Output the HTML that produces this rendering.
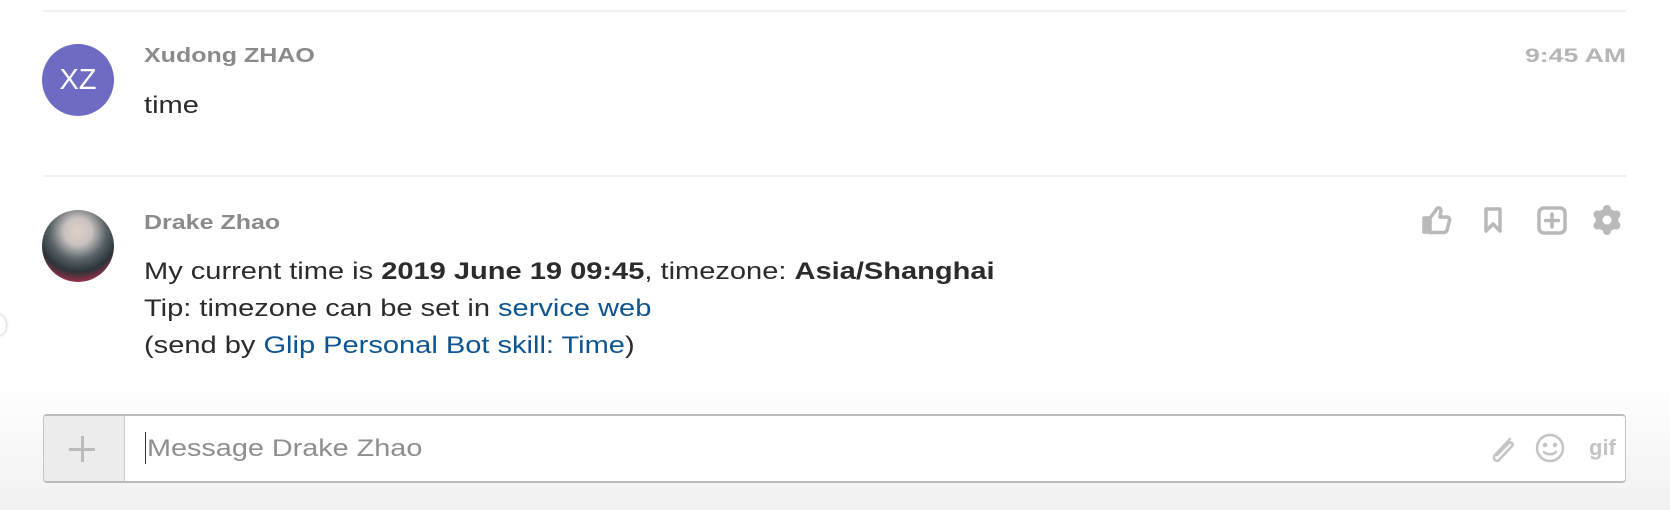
<!DOCTYPE html>
<html><head><style>
body{margin:0;width:1670px;height:510px;overflow:hidden;background:linear-gradient(#fff 0,#fff 380px,#f1f1f1 510px);font-family:"Liberation Sans",sans-serif;position:relative}
.abs{position:absolute}
.hr{position:absolute;left:43px;width:1583px;height:2px;background:#efefef}
.name{position:absolute;left:144px;font-size:20px;font-weight:bold;color:#8a8a8a;transform:scaleX(1.25);transform-origin:0 0;white-space:nowrap}
.txt{position:absolute;left:144px;font-size:24px;color:#2b2b2b;line-height:37px;white-space:nowrap;transform:scaleX(1.21);transform-origin:0 0}
a{color:#0d5590;text-decoration:none}
</style></head><body>
<div class="hr" style="top:10px"></div>
<div class="abs" style="left:42px;top:44px;width:72px;height:72px;border-radius:50%;background:#6e6bc2;color:#fff;font-size:29px;line-height:72px;text-align:center">XZ</div>
<div class="name" style="top:45px">Xudong ZHAO</div>
<div class="abs" style="left:1525px;top:46px;font-size:19px;font-weight:bold;color:#b5b5b5;transform:scaleX(1.4);transform-origin:0 0;white-space:nowrap">9:45 AM</div>
<div class="txt" style="top:87px">time</div>
<div class="hr" style="top:175px"></div>
<div class="abs" style="left:42px;top:210px;width:72px;height:72px;border-radius:50%;background:radial-gradient(circle at 50% 30%,#e0d0c8 0,#c9c2c0 22%,#5a6468 45%,#2b3438 65%,#b0304a 85%,#ddd 100%)"></div>
<div class="name" style="top:212px">Drake Zhao</div>
<div class="txt" style="top:253px">My current time is <b>2019 June 19 09:45</b>, timezone: <b>Asia/Shanghai</b><br>Tip: timezone can be set in <a>service web</a><br>(send by <a>Glip Personal Bot skill: Time</a>)</div>
<svg class="abs" style="left:1420px;top:203px" width="210" height="34" viewBox="0 0 210 34" fill="none" stroke="#b9b9b9" stroke-width="3.5" stroke-linejoin="round" stroke-linecap="round">
<path d="M4 15h6v14H4z" fill="#b9b9b9"/><path d="M10 15l6-8c1-3 5-3 5 1l-1 6h7c2 0 3 2 2.5 4l-2.5 9c-.5 2-2 2.5-3.5 2.5H10"/>
<path d="M66 6h14v22l-7-7-7 7z"/>
<rect x="119" y="5" width="26" height="25" rx="5"/><path d="M132 11v13M125.5 17.5h13"/>
<g transform="translate(187 17)"><circle r="8" stroke-width="7"/><g fill="#b9b9b9" stroke="none"><circle cx="0" cy="-11" r="4"/><circle cx="0" cy="11" r="4"/><circle cx="9.5" cy="-5.5" r="4"/><circle cx="-9.5" cy="-5.5" r="4"/><circle cx="9.5" cy="5.5" r="4"/><circle cx="-9.5" cy="5.5" r="4"/></g></g>
</svg>
<div class="abs" style="left:-8px;top:315px;width:14px;height:20px;border-radius:50%;background:#fff;box-shadow:0 0 3px #aaa"></div>
<div class="abs" style="left:43px;top:414px;width:1581px;height:65px;border:1px solid #c4c4c4;border-top:2px solid #bbb;border-bottom:2px solid #bbb;border-radius:4px;background:#fff;overflow:hidden">
<div class="abs" style="left:0;top:0;width:80px;height:100%;background:#ececec;border-right:1px solid #ccc"></div>
<div class="abs" style="left:25px;top:32px;width:26px;height:3px;background:#bbb"></div>
<div class="abs" style="left:37px;top:20px;width:3px;height:26px;background:#bbb"></div>
<div class="abs" style="left:101px;top:16px;width:1px;height:32px;background:#333"></div>
<div class="abs" style="left:103px;top:19px;font-size:24px;color:#8e8e8e;transform:scaleX(1.2);transform-origin:0 0;white-space:nowrap">Message Drake Zhao</div>
<svg class="abs" style="left:1440px;top:15px" width="140" height="34" viewBox="0 0 140 34" fill="none" stroke="#c4c4c4" stroke-width="2.5" stroke-linecap="round">
<path d="M26 8L11 24c-3 3 1 8 4 5l13-14c2-2-1-5-3-3L13 24"/>
<circle cx="66" cy="17" r="13"/><circle cx="61" cy="14" r="1" fill="#c4c4c4"/><circle cx="71" cy="14" r="1" fill="#c4c4c4"/><path d="M60 21c3 3 9 3 12 0"/>
<text x="105" y="24" fill="#c4c4c4" stroke="none" font-family="Liberation Sans" font-weight="bold" font-size="22">gif</text>
</svg>
</div>
</body></html>
